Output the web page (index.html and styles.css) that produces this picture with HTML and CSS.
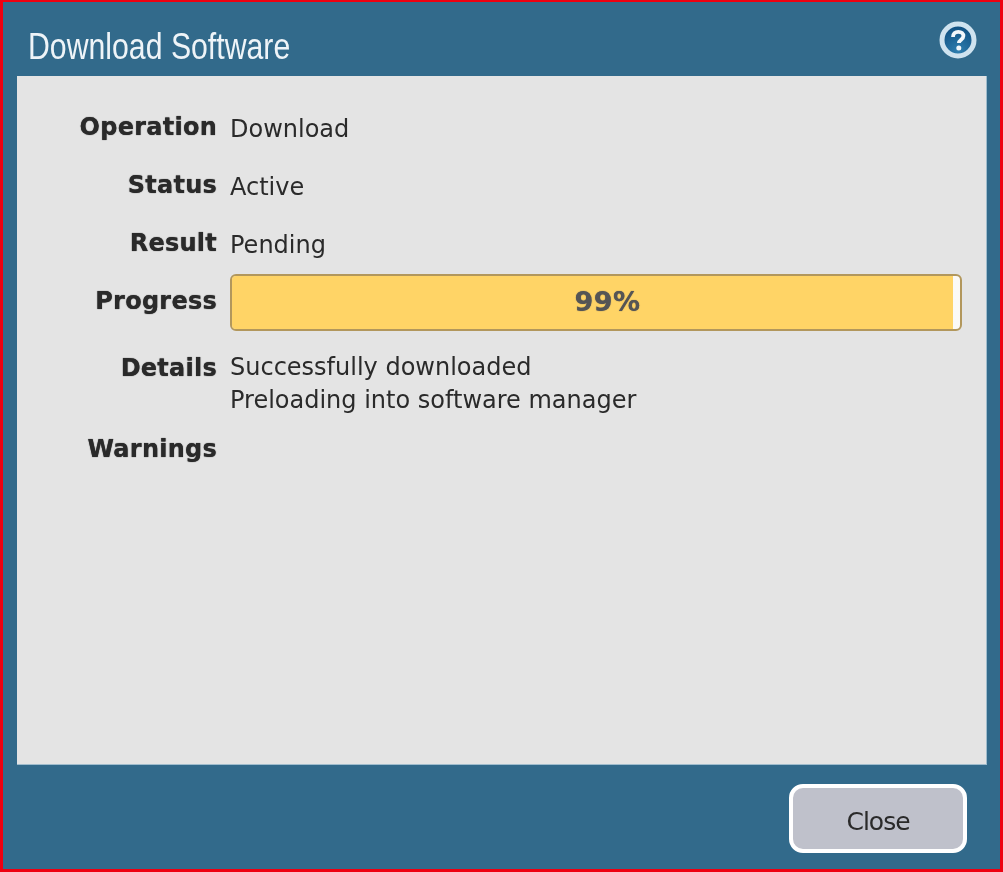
FILE: index.html
```html
<!DOCTYPE html>
<html lang="en">
  <head>
    <meta charset="UTF-8" />
    <title>Download Software</title>
    <link rel="stylesheet" href="styles.css">
  </head>
  <body>
    <div class="dialog">
      <div class="dialog-head">
        <h1 class="dialog-title">Download Software</h1>
        <svg class="help-icon" width="38" height="38" viewBox="0 0 38 38">
          <defs>
            <radialGradient id="helpFill" cx="0.5" cy="0.85" r="0.8">
              <stop offset="0" stop-color="#2f7fb0" />
              <stop offset="1" stop-color="#0f4f80" />
            </radialGradient>
          </defs>
          <circle cx="19" cy="19" r="16" fill="url(#helpFill)" stroke="#cfe3ef" stroke-width="5" />
          <path d="M14 16c0-3.200 2.200-5.200 5.300-5.200 3.100 0 5.100 1.800 5.100 4.300 0 3.600-4.500 3.600-4.500 7" fill="none" stroke="#f2f7fa" stroke-width="3.800" />
          <circle cx="19.800" cy="27" r="2.500" fill="#f2f7fa" />
        </svg>
      </div>

      <div class="dialog-body">
        <div class="row">
          <div class="label">Operation</div>
          <div class="value">Download</div>
        </div>
        <div class="row">
          <div class="label">Status</div>
          <div class="value">Active</div>
        </div>
        <div class="row">
          <div class="label">Result</div>
          <div class="value">Pending</div>
        </div>
        <div class="row row-progress">
          <div class="label">Progress</div>
          <div class="progress">
            <div class="progress-fill" style="width: 99%"></div>
            <span class="progress-text">99%</span>
          </div>
        </div>
        <div class="row row-details">
          <div class="label">Details</div>
          <div class="value value-multi">Successfully downloaded<br />Preloading into software manager</div>
        </div>
        <div class="row">
          <div class="label">Warnings</div>
          <div class="value"></div>
        </div>
      </div>

      <div class="dialog-foot">
        <button class="close-button">Close</button>
      </div>
    </div>
  </body>
</html>
```

FILE: styles.css
```css
html,
body {
  margin: 0;
  padding: 0;
  background-color: #ee0010;
  overflow: hidden;
}

.dialog {
  box-sizing: border-box;
  width: 1003px;
  height: 872px;
  display: flex;
  flex-direction: column;
  border: 3px solid #ee0010;
  border-top-width: 2px;
  background-color: #326a8b;
  font-family: "DejaVu Sans", sans-serif;
  color: #2a2a2a;
  filter: blur(0.6px);
}

.dialog-head {
  height: 72px;
  flex: none;
  display: flex;
  align-items: center;
  justify-content: space-between;
  padding: 0 23px 0 25px;
}

.dialog-title {
  margin: 17px 0 0;
  font-family: "Liberation Sans", sans-serif;
  font-size: 36px;
  font-weight: normal;
  color: #eef4f8;
  transform: scaleX(0.84);
  transform-origin: left center;
}

.help-icon {
  margin-top: 4px;
}

.dialog-body {
  flex: 1;
  margin: 2px 13px 0 14px;
  padding-top: 33px;
  background-color: #e4e4e4;
  border-right: 1px solid #9fbccd;
  border-bottom: 1px solid #9fbccd;
}

.row {
  display: flex;
  gap: 13px;
  min-height: 58px;
}

.label {
  width: 200px;
  flex: none;
  text-align: right;
  font-size: 24px;
  font-weight: bold;
  line-height: 36px;
  letter-spacing: 0.25px;
  text-shadow: 0 0 1px #2a2a2a;
}

.value {
  font-size: 24px;
  line-height: 33px;
  margin-top: 4px;
}

.value-multi {
  margin-top: 1px;
}

.row-progress {
  min-height: 67px;
}

.row-details {
  min-height: 81px;
}

.progress {
  position: relative;
  box-sizing: border-box;
  width: 732px;
  height: 57px;
  margin-top: -9px;
  border: 2px solid #b2975c;
  border-radius: 6px;
  background: linear-gradient(90deg, #e6e2d8, #fbfaf7);
  overflow: hidden;
}

.progress-fill {
  height: 100%;
  background-color: #ffd466;
}

.progress-text {
  position: absolute;
  top: 0;
  left: 0;
  right: 0;
  padding-left: 23px;
  text-align: center;
  line-height: 51px;
  font-size: 27px;
  font-weight: bold;
  letter-spacing: 0.5px;
  color: #555;
  text-shadow: 0 0 1px #555;
}

.dialog-foot {
  height: 104px;
  flex: none;
  display: flex;
  align-items: center;
  justify-content: flex-end;
  padding-right: 33px;
}

.close-button {
  box-sizing: border-box;
  width: 178px;
  height: 69px;
  margin-top: 3px;
  padding-top: 6px;
  border: 4px solid #fff;
  border-radius: 14px;
  background-color: #bfc1cb;
  font-family: "DejaVu Sans", sans-serif;
  font-size: 25px;
  letter-spacing: -1px;
  color: #2a2a2a;
}
```
